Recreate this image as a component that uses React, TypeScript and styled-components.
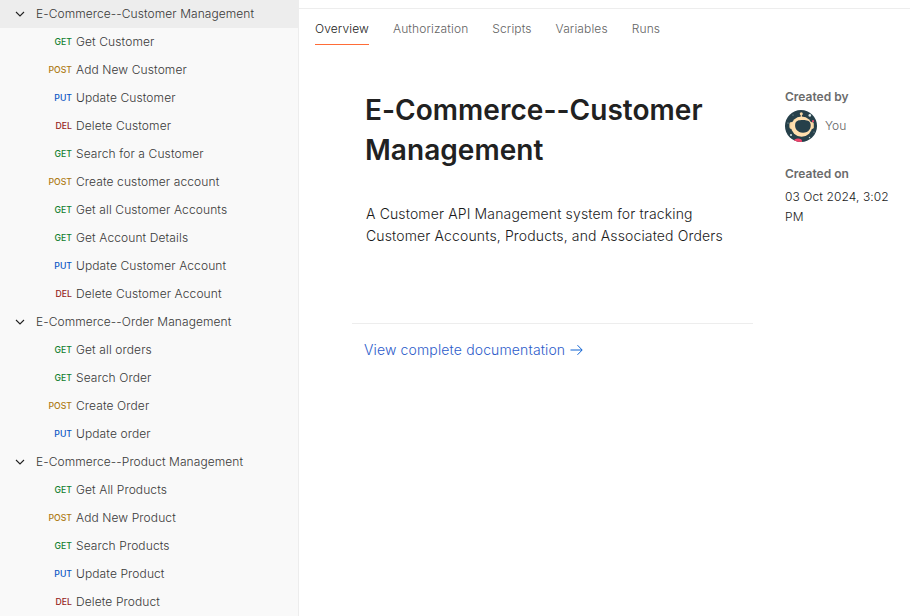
import React from "react";
import styled, { createGlobalStyle } from "styled-components";

const GlobalStyle = createGlobalStyle`
  * { box-sizing: border-box; }
  body { margin: 0; background: #fff; font-family: Inter, "Liberation Sans", sans-serif; font-weight: 350; overflow: hidden; }
  h1, p { margin: 0; }
`;

type Method = "GET" | "POST" | "PUT" | "DEL";

const methodColors: Record<Method, string> = {
  GET: "#128030",
  POST: "#ad7a13",
  PUT: "#0a56c4",
  DEL: "#96241b",
};

const Shell = styled.div`
  display: flex;
  width: 910px;
  height: 616px;
  overflow: hidden;
`;

const Sidebar = styled.nav`
  width: 299px;
  flex: none;
  background: #f9f9f9;
  border-right: 1px solid #ededed;
`;

const FolderRow = styled.div<{ $active?: boolean }>`
  display: flex;
  align-items: center;
  height: 28px;
  padding-left: 14px;
  gap: 10px;
  color: #383838;
  font-size: 12px;
  letter-spacing: 0.07px;
  background: ${(p) => (p.$active ? "#ededed" : "transparent")};
`;

const RequestRow = styled.div`
  display: flex;
  align-items: center;
  height: 28px;
  gap: 4px;
  color: #383838;
  font-size: 12px;
  letter-spacing: 0.11px;
`;

const RowName = styled.span`
  padding-bottom: 2px;
  line-height: 15px;
`;

const MethodTag = styled.span<{ $method: Method }>`
  width: 72px;
  text-align: right;
  font-size: 8.7px;
  line-height: 11px;
  padding-top: 1px;
  font-weight: 550;
  letter-spacing: 0;
  color: ${(p) => methodColors[p.$method]};
`;

const Main = styled.main`
  flex: 1;
  margin-top: 8px;
  border-top: 1px solid #ededed;
`;

const Tabs = styled.div`
  display: flex;
  gap: 24px;
  padding-left: 16px;
  height: 36px;
`;

const Tab = styled.div<{ $active?: boolean }>`
  height: 36px;
  line-height: 40px;
  font-size: 12px;
  letter-spacing: 0.12px;
  color: ${(p) => (p.$active ? "#212121" : "#636363")};
  box-shadow: ${(p) => (p.$active ? "inset 0 -1px 0 #ff6c37" : "none")};
`;

const Content = styled.div`
  display: flex;
  padding-left: 53px;
`;

const Article = styled.article`
  width: 401px;
  padding-top: 45px;
`;

const Title = styled.h1`
  padding-left: 13px;
  font-size: 28px;
  font-weight: 600;
  line-height: 40px;
  letter-spacing: 0.04px;
  color: #212121;
`;

const Description = styled.p`
  width: 380px;
  padding-left: 14px;
  margin-top: 33px;
  font-size: 14px;
  line-height: 22px;
  letter-spacing: 0.14px;
  color: #1a1a1a;
`;

const Footer = styled.div`
  display: flex;
  align-items: center;
  gap: 5px;
  height: 53px;
  margin-top: 76px;
  padding-left: 12px;
  border-top: 1px solid #ededed;
  color: #2d5cca;
  font-size: 14px;
  letter-spacing: 0.14px;
`;

const FooterText = styled.span`
  line-height: 17px;
  padding-bottom: 2px;
`;

const Details = styled.aside`
  width: 125px;
  margin-left: 32px;
  padding-top: 42px;
  font-size: 12px;
  line-height: 20px;
  color: #1a1a1a;
`;

const Label = styled.div`
  color: #6b6b6b;
  font-weight: 600;
`;

const Author = styled.div`
  display: flex;
  align-items: center;
  gap: 8px;
  height: 32px;
  margin: 3px 0 22px;
  color: #636363;
`;

const DateText = styled.p`
  width: 110px;
  margin-top: 3px;
  letter-spacing: 0.1px;
`;

const Chevron = () => (
  <svg width="12" height="12" viewBox="0 0 12 12" fill="none" stroke="#212121" strokeWidth="1.1">
    <path d="M2 4l4 4 4-4" />
  </svg>
);

const Arrow = () => (
  <svg width="13" height="12" viewBox="0 0 13 12" fill="none" stroke="#0f62d2" strokeWidth="1">
    <path d="M0.5 6h11.5M7.5 1.2L12.2 6 7.5 10.8" />
  </svg>
);

const Avatar = () => (
  <svg width="32" height="32" viewBox="0 0 32 32">
    <defs>
      <clipPath id="avatar">
        <circle cx="16" cy="16" r="16" />
      </clipPath>
    </defs>
    <g clipPath="url(#avatar)">
      <rect width="32" height="32" fill="#26404a" />
      <path d="M16.3 4v4" stroke="#f6d6a4" strokeWidth="1.2" />
      <circle cx="16.3" cy="3.7" r="1.5" fill="#f6d6a4" />
      <rect x="4.4" y="12" width="4" height="7" rx="2" fill="#f6d6a4" />
      <rect x="25.2" y="12" width="3.6" height="7" rx="1.8" fill="#f6d6a4" />
      <ellipse cx="16.6" cy="16.6" rx="10.6" ry="10.2" fill="#ffdfae" />
      <path d="M10.2 14c.6-3.4 3.4-4 7.6-4s7.2.8 7.8 4c.8 4.6-2 8.7-7.6 8.7s-8.6-4.3-7.8-8.7z" fill="#26404a" />
      <ellipse cx="13" cy="31.2" rx="4" ry="2.6" fill="#f0446c" />
      <circle cx="28" cy="11.2" r="1.1" fill="#e6496c" />
      <circle cx="24.8" cy="5.4" r="1.3" fill="#d8e5e5" />
      <circle cx="6" cy="25" r="1" fill="#d8e5e5" />
      <circle cx="24.5" cy="27.5" r=".7" fill="#b6caca" />
      <circle cx="8" cy="5" r=".6" fill="#9cb2b5" />
      <circle cx="3" cy="13" r=".6" fill="#9cb2b5" />
      <circle cx="29" cy="22" r=".6" fill="#9cb2b5" />
    </g>
  </svg>
);

const folders: { name: string; requests: [Method, string][] }[] = [
  {
    name: "E-Commerce--Customer Management",
    requests: [
      ["GET", "Get Customer"],
      ["POST", "Add New Customer"],
      ["PUT", "Update Customer"],
      ["DEL", "Delete Customer"],
      ["GET", "Search for a Customer"],
      ["POST", "Create customer account"],
      ["GET", "Get all Customer Accounts"],
      ["GET", "Get Account Details"],
      ["PUT", "Update Customer Account"],
      ["DEL", "Delete Customer Account"],
    ],
  },
  {
    name: "E-Commerce--Order Management",
    requests: [
      ["GET", "Get all orders"],
      ["GET", "Search Order"],
      ["POST", "Create Order"],
      ["PUT", "Update order"],
    ],
  },
  {
    name: "E-Commerce--Product Management",
    requests: [
      ["GET", "Get All Products"],
      ["POST", "Add New Product"],
      ["GET", "Search Products"],
      ["PUT", "Update Product"],
      ["DEL", "Delete Product"],
    ],
  },
];

const tabs = ["Overview", "Authorization", "Scripts", "Variables", "Runs"];

export default function App() {
  return (
    <>
      <GlobalStyle />
      <Shell>
        <Sidebar>
          {folders.map((folder, i) => (
            <React.Fragment key={folder.name}>
              <FolderRow $active={i === 0}>
                <Chevron />
                <RowName>{folder.name}</RowName>
              </FolderRow>
              {folder.requests.map(([method, name]) => (
                <RequestRow key={name}>
                  <MethodTag $method={method}>{method}</MethodTag>
                  <RowName>{name}</RowName>
                </RequestRow>
              ))}
            </React.Fragment>
          ))}
        </Sidebar>
        <Main>
          <Tabs>
            {tabs.map((tab, i) => (
              <Tab key={tab} $active={i === 0}>{tab}</Tab>
            ))}
          </Tabs>
          <Content>
            <Article>
              <Title>E-Commerce--Customer Management</Title>
              <Description>
                A Customer API Management system for tracking Customer Accounts, Products, and Associated Orders
              </Description>
              <Footer>
                <FooterText>View complete documentation</FooterText>
                <Arrow />
              </Footer>
            </Article>
            <Details>
              <Label>Created by</Label>
              <Author>
                <Avatar />
                <span>You</span>
              </Author>
              <Label>Created on</Label>
              <DateText>03 Oct 2024, 3:02 PM</DateText>
            </Details>
          </Content>
        </Main>
      </Shell>
    </>
  );
}
